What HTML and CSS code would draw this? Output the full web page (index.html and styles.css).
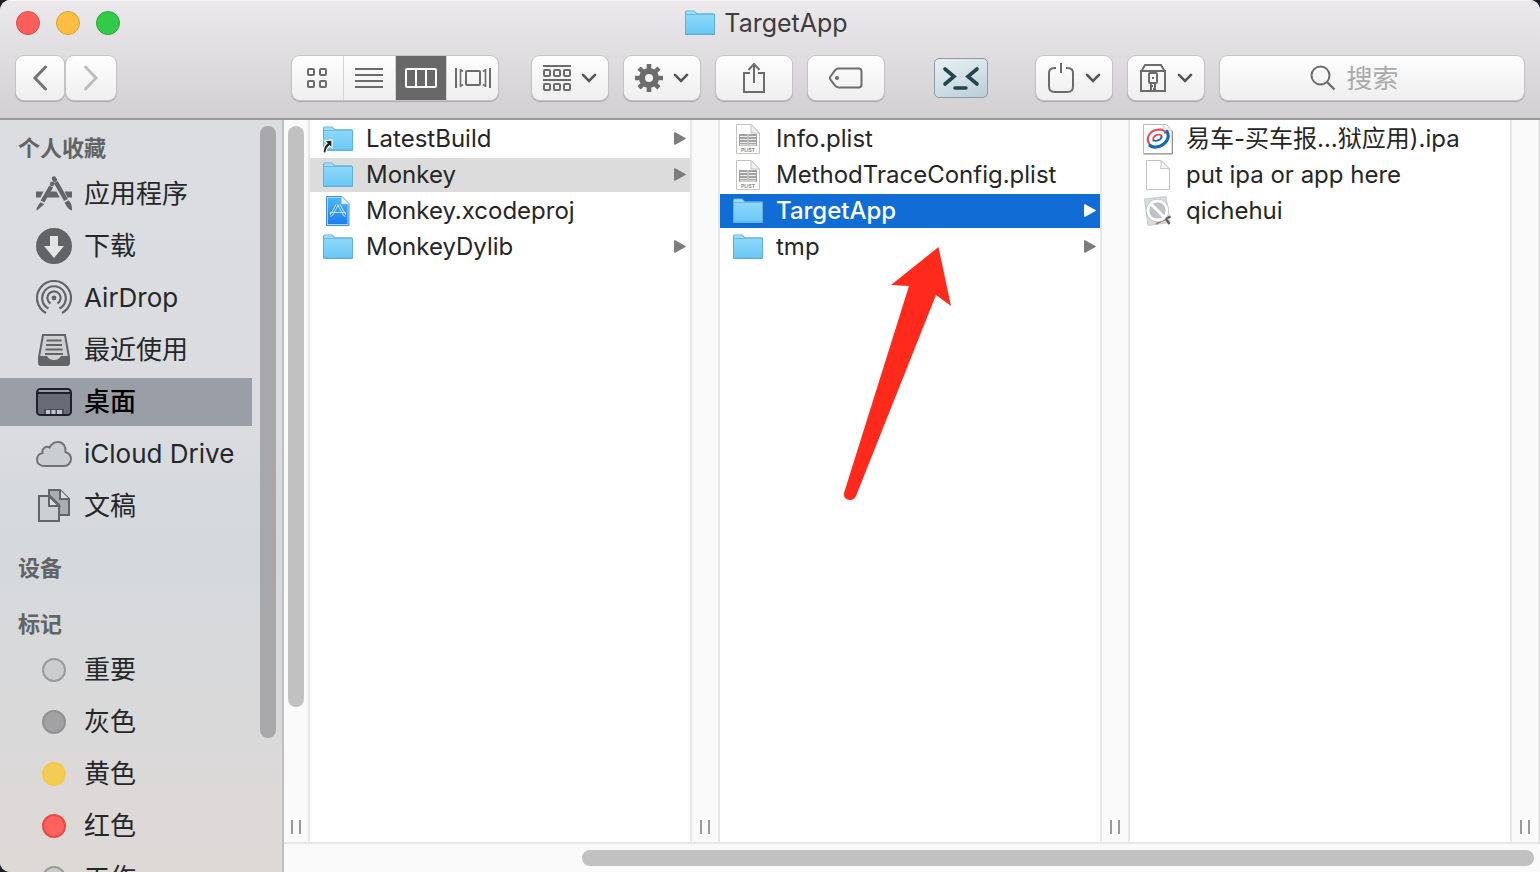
FILE: index.html
```html
<!DOCTYPE html>
<html lang="zh-CN">
<head>
<meta charset="utf-8">
<meta name="viewport" content="width=device-width, initial-scale=1">
<title>TargetApp</title>
<link rel="stylesheet" href="styles.css">
</head>
<body>
<svg class="sprite" width="0" height="0" aria-hidden="true">
  <defs>
    <linearGradient id="folder-fill" x1="0" y1="0" x2="0" y2="1"><stop offset="0" stop-color="#8dd7fb"/><stop offset="1" stop-color="#6bc9f6"/></linearGradient>
    <linearGradient id="xcode-fill" x1="0" y1="0" x2="0" y2="1"><stop offset="0" stop-color="#4cb8fa"/><stop offset="1" stop-color="#1f7cf0"/></linearGradient>
    <symbol id="folder" viewBox="0 0 32 32">
      <path d="M1 27V5q0-1.500 1.500-1.500h7q1 0 1.800 1l1.700 1.700h16.500q1.500 0 1.500 1.500V27q0 1-1 1H2q-1 0-1-1z" fill="#5cb2dc"/>
      <path d="M2 7V5q0-.800.800-.800h6.500q.8 0 1.400.8L12.500 7z" fill="#9bdcfb"/>
      <path d="M2 8h28v18.500H2z" fill="url(#folder-fill)"/>
      <path d="M1.500 7.500h29" stroke="#68bce4"/>
    </symbol>
    <symbol id="plist" viewBox="0 0 32 32">
      <path d="M4.500 1.500h14.500l8.500 8.500v20.500h-23z" fill="#fff" stroke="#c3c3c3"/>
      <path d="M19 1.500V10h8.500z" fill="#f0f0f0" stroke="#c3c3c3"/>
      <path d="M7 11h18v12H7z" fill="#a2a2a2"/>
      <path d="M8 13.500h7.500M8 16.500h7.500M8 19.500h7.500M17 13.500h7M17 16.500h7M17 19.500h7M8 21.800h7.500M17 21.800h7" stroke="#ededed" stroke-width="1.200"/>
      <path d="M16 11v12" stroke="#ddd"/>
      <text x="16" y="29" text-anchor="middle" class="plist-label">PLIST</text>
    </symbol>
    <symbol id="chevron" viewBox="0 0 16 10"><path d="M2 1.800l6 6 6-6" fill="none" stroke="#555" stroke-width="2.600" stroke-linecap="round"/></symbol>
    <symbol id="triangle" viewBox="0 0 12 14"><path d="M0 1Q0 0 1.200.3L11.500 6q.8.500 0 1L1.200 12.700Q0 13 0 12z" fill="currentColor"/></symbol>
  </defs>
</svg>
<div class="window">
  <header class="header">
    <div class="titlebar">
      <div class="lights">
        <button class="light light-close" aria-label="关闭"></button>
        <button class="light light-min" aria-label="最小化"></button>
        <button class="light light-zoom" aria-label="缩放"></button>
      </div>
      <h1 class="title"><svg class="icon-file"><use href="#folder"/></svg>TargetApp</h1>
    </div>
    <div class="toolbar">
      <div class="nav">
        <button class="tool tool-back" aria-label="后退"><svg width="16" height="26" viewBox="0 0 16 26" fill="none" stroke="#747474" stroke-width="3" stroke-linecap="round"><path d="M13.500 2L3 13l10.500 11"/></svg></button>
        <button class="tool tool-forward" aria-label="前进"><svg width="16" height="26" viewBox="0 0 16 26" fill="none" stroke="#bdbdbd" stroke-width="3" stroke-linecap="round"><path d="M2.500 2L13 13 2.500 24"/></svg></button>
      </div>
      <div class="views">
        <button class="view" aria-label="图标"><svg width="22" height="22" viewBox="0 0 22 22" fill="none" stroke="#6c6c6c" stroke-width="2"><rect x="2" y="2" width="6" height="6" rx="1"/><rect x="14" y="2" width="6" height="6" rx="1"/><rect x="2" y="14" width="6" height="6" rx="1"/><rect x="14" y="14" width="6" height="6" rx="1"/></svg></button>
        <button class="view" aria-label="列表"><svg width="28" height="20" viewBox="0 0 28 20" stroke="#6c6c6c" stroke-width="2"><path d="M0 1h28M0 7h28M0 13h28M0 19h28"/></svg></button>
        <button class="view view-on" aria-label="分栏" aria-pressed="true"><svg width="32" height="20" viewBox="0 0 32 20" fill="none" stroke="#fff" stroke-width="2"><rect x="1" y="1" width="30" height="18" rx="1"/><path d="M11 1v18M21 1v18"/></svg></button>
        <button class="view" aria-label="Cover Flow"><svg width="36" height="22" viewBox="0 0 36 22" fill="none" stroke="#6c6c6c" stroke-width="2"><path d="M1 1v20M35 1v20"/><rect x="11" y="4" width="14" height="14" rx="1"/><path d="M5.500 2v18M5 2.500l3 2M5 19.500l3-2M30.500 2v18M31 2.500l-3 2M31 19.500l-3-2" stroke-width="1.600"/></svg></button>
      </div>
      <button class="tool tool-group" aria-label="排列"><svg width="28" height="26" viewBox="0 0 28 26" fill="none" stroke="#6c6c6c" stroke-width="2"><path d="M0 1h28M0 15h28"/><rect x="1" y="5" width="6" height="6" rx="1"/><rect x="11" y="5" width="6" height="6" rx="1"/><rect x="21" y="5" width="6" height="6" rx="1"/><rect x="1" y="19" width="6" height="6" rx="1"/><rect x="11" y="19" width="6" height="6" rx="1"/><rect x="21" y="19" width="6" height="6" rx="1"/></svg><svg class="icon-chevron"><use href="#chevron"/></svg></button>
      <button class="tool" aria-label="操作"><svg width="28" height="28" viewBox="-14 -14 28 28" fill="none" stroke="#6c6c6c"><circle r="7" stroke-width="6"/><path stroke-width="4.600" d="M0-14v6M0 14V8M-14 0h6M14 0H8M-9.900-9.900l4.300 4.300M9.900-9.900l-4.300 4.300M-9.900 9.900l4.300-4.300M9.900 9.900l-4.300-4.300"/></svg><svg class="icon-chevron"><use href="#chevron"/></svg></button>
      <button class="tool" aria-label="共享"><svg width="24" height="32" viewBox="0 0 24 32" fill="none" stroke="#6c6c6c" stroke-width="2"><path d="M8 11H2v19h20V11h-6M12 21V2M6.500 8L12 2l5.500 6"/></svg></button>
      <button class="tool" aria-label="标记"><svg width="34" height="22" viewBox="0 0 34 22" fill="none" stroke="#6c6c6c" stroke-width="2"><path d="M9.500 1.500h20q3 0 3 3v13q0 3-3 3h-20q-2 0-3.500-1.800L1.800 13q-1.600-2 0-4L6 3.300Q7.500 1.500 9.500 1.500z"/><circle cx="8" cy="11" r="2" fill="#6c6c6c" stroke="none"/></svg></button>
      <button class="terminal" aria-label="终端"><svg width="38" height="24" viewBox="0 0 38 24" fill="none" stroke="#24454e" stroke-width="3.600" stroke-linecap="round"><path d="M3 3l9 7.500L3 18M35 3l-9 7.500 9 7.500M13 22h11"/></svg></button>
      <button class="tool" aria-label="推出"><svg width="28" height="32" viewBox="0 0 28 32" fill="none" stroke="#6c6c6c" stroke-width="2"><path d="M9 6H7.500Q2 6 2 11v13.500Q2 30 7.500 30h13q5.500 0 5.500-5.500V11q0-5-5.500-5H19M14 1v10"/></svg><svg class="icon-chevron"><use href="#chevron"/></svg></button>
      <button class="tool" aria-label="归档"><svg width="28" height="30" viewBox="0 0 28 30" fill="none" stroke="#6c6c6c" stroke-width="2"><path d="M2 8v20h24V8zM2 9l4-7h16l4 7"/><rect x="10" y="10" width="8" height="10" rx="1"/><path d="M12 20v8M16 20v8M14 14v2M12 23h2M14 26h2"/></svg><svg class="icon-chevron"><use href="#chevron"/></svg></button>
      <label class="search"><svg width="26" height="26" viewBox="0 0 26 26" fill="none" stroke="#6c6c6c" stroke-width="2"><circle cx="10.500" cy="10.500" r="9"/><path d="M17 17l7.500 7.500" stroke-width="2.400"/></svg><input class="search-input" type="search" placeholder="搜索" aria-label="搜索"></label>
    </div>
  </header>
  <div class="body">
    <aside class="sidebar">
      <nav class="places">
        <section class="section">
          <h2 class="heading">个人收藏</h2>
          <a class="place" href="#"><svg class="icon-place" viewBox="0 0 36 36"><path d="M0 15.500h7.500L4.500 21.500H0zM28.500 15.500H36v6h-4.500zM14.500 15.500h6l3.300 6H11z" fill="#636466"/><g fill="none" stroke="#636466" stroke-width="4.400"><path d="M18 2.500l.8 1.400" stroke-linecap="round"/><path d="M19.800 6.200L30 24M15.200 10.500L6.500 25.500"/><path d="M16.300 7.800l-.2.300" stroke-linecap="round"/></g><path d="M28.600 26.500l3.900-2.300q3.500 3.500 3.500 8.300v2q-5-1.500-7.400-8zM4.600 26.300l3.600 2L1 34.500q-2-1.500 3.600-8.200z" fill="#636466"/></svg>应用程序</a>
          <a class="place" href="#"><svg class="icon-place" viewBox="0 0 36 36"><circle cx="18" cy="18" r="18" fill="#626365"/><path d="M14 8h8v10h6l-10 12L8 18h6z" fill="#e2e4e6"/></svg>下载</a>
          <a class="place" href="#"><svg class="icon-place" viewBox="0 0 36 36" fill="none" stroke="#636466" stroke-width="2.200"><path d="M10 33A17 17 0 1 1 26 33M12.500 28.500A11.800 11.800 0 1 1 23.500 28.500M14.500 23.500A6.600 6.600 0 1 1 21.500 23.500"/><circle cx="18" cy="18" r="2.400" fill="#636466" stroke="none"/></svg>AirDrop</a>
          <a class="place" href="#"><svg class="icon-place" viewBox="0 0 36 36"><path d="M7 3h22l4 22v6q0 2-2 2H5q-2 0-2-2v-6z" fill="#ced0d2" stroke="#636466" stroke-width="2"/><path d="M3 24h8q2 4 7 4t7-4h8v7q0 2-2 2H5q-2 0-2-2z" fill="#636466"/><path d="M10.500 8.500h15M10 13h16M9.500 17.500h17M9 22h18" stroke="#636466" stroke-width="2"/></svg>最近使用</a>
          <a class="place place-on" href="#" aria-current="page"><svg class="icon-place" viewBox="0 0 36 36"><rect x="1" y="5" width="34" height="26" rx="3.500" fill="#686c76" stroke="#1e212b" stroke-width="2"/><path d="M3 7h30" stroke="#979ca5" stroke-width="2"/><path d="M2 9h32" stroke="#1e212b" stroke-width="2"/><path d="M8 25h20v5H8z" fill="#484c56"/><path d="M10 26h4v4h-4zM15.500 26h4v4h-4zM21 26h5v4h-5z" fill="#c2c5ca"/></svg>桌面</a>
          <a class="place" href="#"><svg class="icon-place" viewBox="0 0 36 36"><path d="M8.500 30C4 30 1 27.300 1 23.500 1 20 3.500 17.500 6.500 17 5.500 12.500 10 9.500 13.500 11.500 15.500 7.800 18.500 6 22 6c5 0 8 4 7.500 10 3.500 1 5.500 3.500 5.500 7 0 4-3 7-7 7z" fill="#cbced0" stroke="#707274" stroke-width="2"/></svg>iCloud Drive</a>
          <a class="place" href="#"><svg class="icon-place" viewBox="0 0 36 36" stroke="#636668" stroke-width="2"><path d="M13 2h11l9 9v16H13z" fill="#abaeb1"/><path d="M24 2v9h9" fill="#dde0e2"/><path d="M3 8h11l9 9v16H3z" fill="#ccd0d2"/><path d="M13 8v10h10z" fill="#dde0e2"/></svg>文稿</a>
        </section>
        <section class="section section-next"><h2 class="heading">设备</h2></section>
        <section class="section section-next">
          <h2 class="heading">标记</h2>
          <a class="place" href="#"><span class="dot"></span>重要</a>
          <a class="place" href="#"><span class="dot dot-gray"></span>灰色</a>
          <a class="place" href="#"><span class="dot dot-yellow"></span>黄色</a>
          <a class="place" href="#"><span class="dot dot-red"></span>红色</a>
          <a class="place" href="#"><span class="dot"></span>工作</a>
        </section>
      </nav>
      <div class="track"><div class="thumb"></div></div>
    </aside>
    <main class="browser">
      <div class="columns">
        <div class="gutter gutter-first"><div class="thumb thumb-light"></div><span class="grip"></span></div>
        <div class="column">
          <button class="file"><svg class="icon-file" viewBox="0 0 32 32"><use href="#folder" width="32" height="32"/><path d="M10 17v8l-2.500-2.200Q4.500 25 3.500 31L1 29q.5-6 4-8.800L2.500 18z" fill="#222" stroke="#fff" stroke-width="1.200"/></svg><span class="name">LatestBuild</span><svg class="icon-more"><use href="#triangle"/></svg></button>
          <button class="file file-path"><svg class="icon-file"><use href="#folder"/></svg><span class="name">Monkey</span><svg class="icon-more"><use href="#triangle"/></svg></button>
          <button class="file"><svg class="icon-file" viewBox="0 0 32 32"><path d="M4.500 1.500H20l7 7v22H4.500z" fill="#a9d6fa" stroke="#3d8fe0"/><path d="M6 3h13.500l6 6.500V29H6z" fill="url(#xcode-fill)"/><path d="M19.500 1.500v7.500H27z" fill="#eef6fd" stroke="#a8cdf0" stroke-width=".6"/><path d="M15.500 9.500l6 11M16.500 9.500l-6 11M18 9.500l5.500 10M14 9.500L8.500 19.500M8.500 17.500h15M8.500 21.500l2-1M23.500 21.500l-2-1M8.500 17v3M23.500 17v3" stroke="#c4e4fe" stroke-width="1" fill="none"/></svg><span class="name">Monkey.xcodeproj</span></button>
          <button class="file"><svg class="icon-file"><use href="#folder"/></svg><span class="name">MonkeyDylib</span><svg class="icon-more"><use href="#triangle"/></svg></button>
        </div>
        <div class="gutter"><span class="grip"></span></div>
        <div class="column">
          <button class="file"><svg class="icon-file"><use href="#plist"/></svg><span class="name">Info.plist</span></button>
          <button class="file"><svg class="icon-file"><use href="#plist"/></svg><span class="name">MethodTraceConfig.plist</span></button>
          <button class="file file-on"><svg class="icon-file"><use href="#folder"/></svg><span class="name">TargetApp</span><svg class="icon-more"><use href="#triangle"/></svg></button>
          <button class="file"><svg class="icon-file"><use href="#folder"/></svg><span class="name">tmp</span><svg class="icon-more"><use href="#triangle"/></svg></button>
          <svg class="pointer" width="108" height="254" viewBox="0 0 108 254" aria-hidden="true"><path d="M96.500 0L109 59 94 48 14 249q-2 4-6 4-7-1-6-7L67 39 49 38z" fill="#ff2a1b"/></svg>
        </div>
        <div class="gutter"><span class="grip"></span></div>
        <div class="column">
          <button class="file"><svg class="icon-file" viewBox="0 0 32 32"><path d="M1.500 1.500h23l5.500 6v23H1.500z" fill="#fff" stroke="#bbb"/><path d="M1.500 31h29V8" stroke="#8f8f8f" fill="none"/><path d="M21 1.500v6h9" fill="#eee" stroke="#ccc" stroke-width=".7"/><g fill="none" stroke-linecap="round"><path d="M7.500 21C3 15 8 7 17 6.500q6 0 6 3.500" stroke="#e34a55" stroke-width="2"/><path d="M11.500 17.500C10 12 19 9.500 19.500 13.500" stroke="#e34a55" stroke-width="1.800"/><path d="M25 8.500c3.500 6-1 14-10.500 15.500q-4.500.5-6.500-1.500" stroke="#1668bd" stroke-width="3.200"/><path d="M19.500 13.500c0 3.500-5 5-8 4" stroke="#1668bd" stroke-width="1.800"/></g></svg><span class="name">易车-买车报…狱应用).ipa</span></button>
          <button class="file"><svg class="icon-file" viewBox="0 0 32 32"><path d="M4.500 1.500h14.500l8.500 8.500v20.500h-23z" fill="#fff" stroke="#c3c3c3"/><path d="M19 1.500Q19.500 6 18.500 9.500q5-.5 9 .5z" fill="#f7f7f7" stroke="#c3c3c3"/></svg><span class="name">put ipa or app here</span></button>
          <button class="file"><svg class="icon-file" viewBox="0 0 32 32"><path d="M2.500 4L24 1.500l4 26L6 30.500z" fill="#d6dde0" stroke="#c6ced1"/><path d="M14 29l10-5" stroke="#a9744d" stroke-width="1.600"/><path d="M23 22.500l4.500 6.500M28.500 21.500L23 24" stroke="#6b5a4f" stroke-width="2.200"/><circle cx="15.500" cy="15.500" r="9.500" fill="#bfc3c5" stroke="#b4b8ba" stroke-width="4"/><circle cx="15.500" cy="15.500" r="9.500" fill="none" stroke="#fff" stroke-width="2.800"/><path d="M9 9l13 13" stroke="#fff" stroke-width="3"/></svg><span class="name">qichehui</span></button>
        </div>
        <div class="gutter"><span class="grip"></span></div>
      </div>
      <div class="hscroll"><div class="hthumb"></div></div>
    </main>
  </div>
</div>
</body>
</html>
```

FILE: styles.css
```css
* { box-sizing: border-box; }
body {
  margin: 0;
  background: #1d1c28;
  color: #262626;
  font-family: Inter, "Noto Sans CJK SC", sans-serif;
  font-size: 24px;
}
button, input { margin: 0; padding: 0; border: 0; font: inherit; color: inherit; }
svg { flex: none; display: block; }
.sprite { position: absolute; }
.plist-label { font-size: 5px; font-weight: 700; fill: #8a8a8a; }

.window {
  height: 100vh;
  display: flex;
  flex-direction: column;
  overflow: hidden;
  border-radius: 10px 10px 0 10px;
  background: #fff;
}

/* Title bar and toolbar */
.header {
  flex: none;
  height: 120px;
  background: linear-gradient(#ebe9eb, #d2d0d2);
  border-top: 1px solid #f6f5f6;
  border-bottom: 2px solid #9b999b;
}
.titlebar { display: grid; grid-template-columns: 1fr auto 1fr; align-items: center; height: 43px; padding: 0 16px; }
.lights { display: flex; gap: 16px; }
.light { width: 24px; height: 24px; border-radius: 50%; border: 1px solid; }
.light-close { background: #fc5f5b; border-color: #e04a46; }
.light-min { background: #fdbe41; border-color: #dea035; }
.light-zoom { background: #34ca49; border-color: #27aa35; }
.title { display: flex; align-items: center; gap: 8px; margin: 0; padding-right: 8px; font-size: 25px; font-weight: 400; color: #3d3c3f; }
.toolbar { display: flex; align-items: center; gap: 16px; height: 68px; padding: 0 16px; }
.nav { display: flex; gap: 2px; margin-right: 160px; }
.tool, .views, .search {
  height: 44px;
  border-radius: 8px;
  background: linear-gradient(#fefefe, #f0eff0);
  box-shadow: 0 0 0 1px #c6c4c6, 0 1px 1px 1px #aaa8aa;
}
.tool { display: flex; align-items: center; justify-content: center; gap: 10px; width: 76px; flex: none; }
.tool-back { width: 48px; }
.tool-forward { width: 50px; }
.tool-group { margin-left: 18px; }
.icon-chevron { width: 16px; height: 10px; }
.views { display: flex; flex: none; width: 206px; overflow: hidden; }
.view { flex: 1; display: flex; align-items: center; justify-content: center; background: none; border-right: 1px solid #d4d4d4; }
.view:last-child { border-right: 0; }
.view-on { background: #686868; }
.terminal {
  display: flex;
  align-items: center;
  justify-content: center;
  flex: none;
  width: 54px;
  height: 40px;
  margin: 0 32px 0 34px;
  border-radius: 5px;
  border: 1px solid #8b9ca5;
  background: linear-gradient(160deg, #e8f0f4, #d3e1e8 50%, #b9ccd5);
}
.search { flex: 1; min-width: 0; display: flex; align-items: center; gap: 10px; padding-left: 6%; }
.search-input { flex: 1; min-width: 0; background: none; outline: 0; font-size: 26px; }
.search-input::placeholder { color: #aaa; opacity: 1; }

/* Sidebar */
.body { flex: 1; min-height: 0; display: flex; }
.sidebar {
  flex: none;
  display: flex;
  width: 284px;
  overflow: hidden;
  border-right: 2px solid #bfbfc1;
  background: linear-gradient(#dcdde0, #dadcdf 40%, #d5d9dc 55%, #d8d9db 72%, #dcd9d8 90%, #dcd9d7);
}
.places { width: 252px; padding-top: 6px; }
.section { display: flex; flex-direction: column; gap: 4px; }
.section-next { margin-top: 16px; }
.heading { height: 40px; margin: 0; padding-left: 18px; font-size: 22px; line-height: 44px; font-weight: 700; color: #626365; }
.place { flex: none; display: flex; align-items: center; gap: 12px; height: 48px; padding-left: 36px; font-size: 26px; line-height: 48px; white-space: nowrap; color: #262729; text-decoration: none; }
.place-on { background: #9a9ea6; color: #000; font-weight: 500; }
.icon-place { width: 36px; height: 36px; }
.dot { width: 24px; height: 24px; margin: 0 6px; border-radius: 50%; border: 2px solid #9a9a9c; background: #cbccce; }
.dot-gray { background: #a2a2a4; border-color: #919193; }
.dot-yellow { background: #f3cd53; border-color: #f4ca47; }
.dot-red { background: #fd625e; border-color: #ef4743; }
.track { width: 24px; padding: 6px 0 0 8px; }
.thumb { width: 16px; height: 82%; border-radius: 8px; background: #a8a8aa; }

/* Column browser */
.browser { flex: 1; min-width: 0; display: flex; flex-direction: column; }
.columns { flex: 1; min-height: 0; display: flex; }
.column { position: relative; flex: 1; min-width: 0; display: flex; flex-direction: column; gap: 2px; padding-top: 2px; }
.gutter { flex: none; display: flex; flex-direction: column; align-items: center; width: 30px; padding: 6px 0 8px; background: #fafafa; border: solid #e7e7e7; border-width: 0 2px; }
.gutter-first { width: 26px; border-left: 0; }
.thumb-light { background: #c1c1c1; }
.grip { width: 10px; height: 14px; margin-top: auto; border: solid #999; border-width: 0 2px; }
.file { flex: none; display: flex; align-items: center; gap: 12px; height: 34px; padding: 0 4px 0 12px; background: none; text-align: left; color: #262626; }
.name { flex: 1; min-width: 0; line-height: 34px; white-space: nowrap; }
.icon-file { width: 32px; height: 32px; }
.icon-more { width: 12px; height: 14px; color: #7d7d7d; }
.file-path { background: #dcdcdc; }
.file-on { background: #116cd6; color: #fff; font-weight: 500; }
.file-on .icon-more { color: #fff; }
.pointer { position: absolute; left: 122px; top: 127px; overflow: visible; }
.hscroll { flex: none; display: flex; justify-content: flex-end; height: 30px; padding: 6px; border-top: 2px solid #e7e7e7; background: #fafafa; }
.hthumb { width: 76.5%; height: 16px; border-radius: 8px; background: #c1c1c1; }
```
